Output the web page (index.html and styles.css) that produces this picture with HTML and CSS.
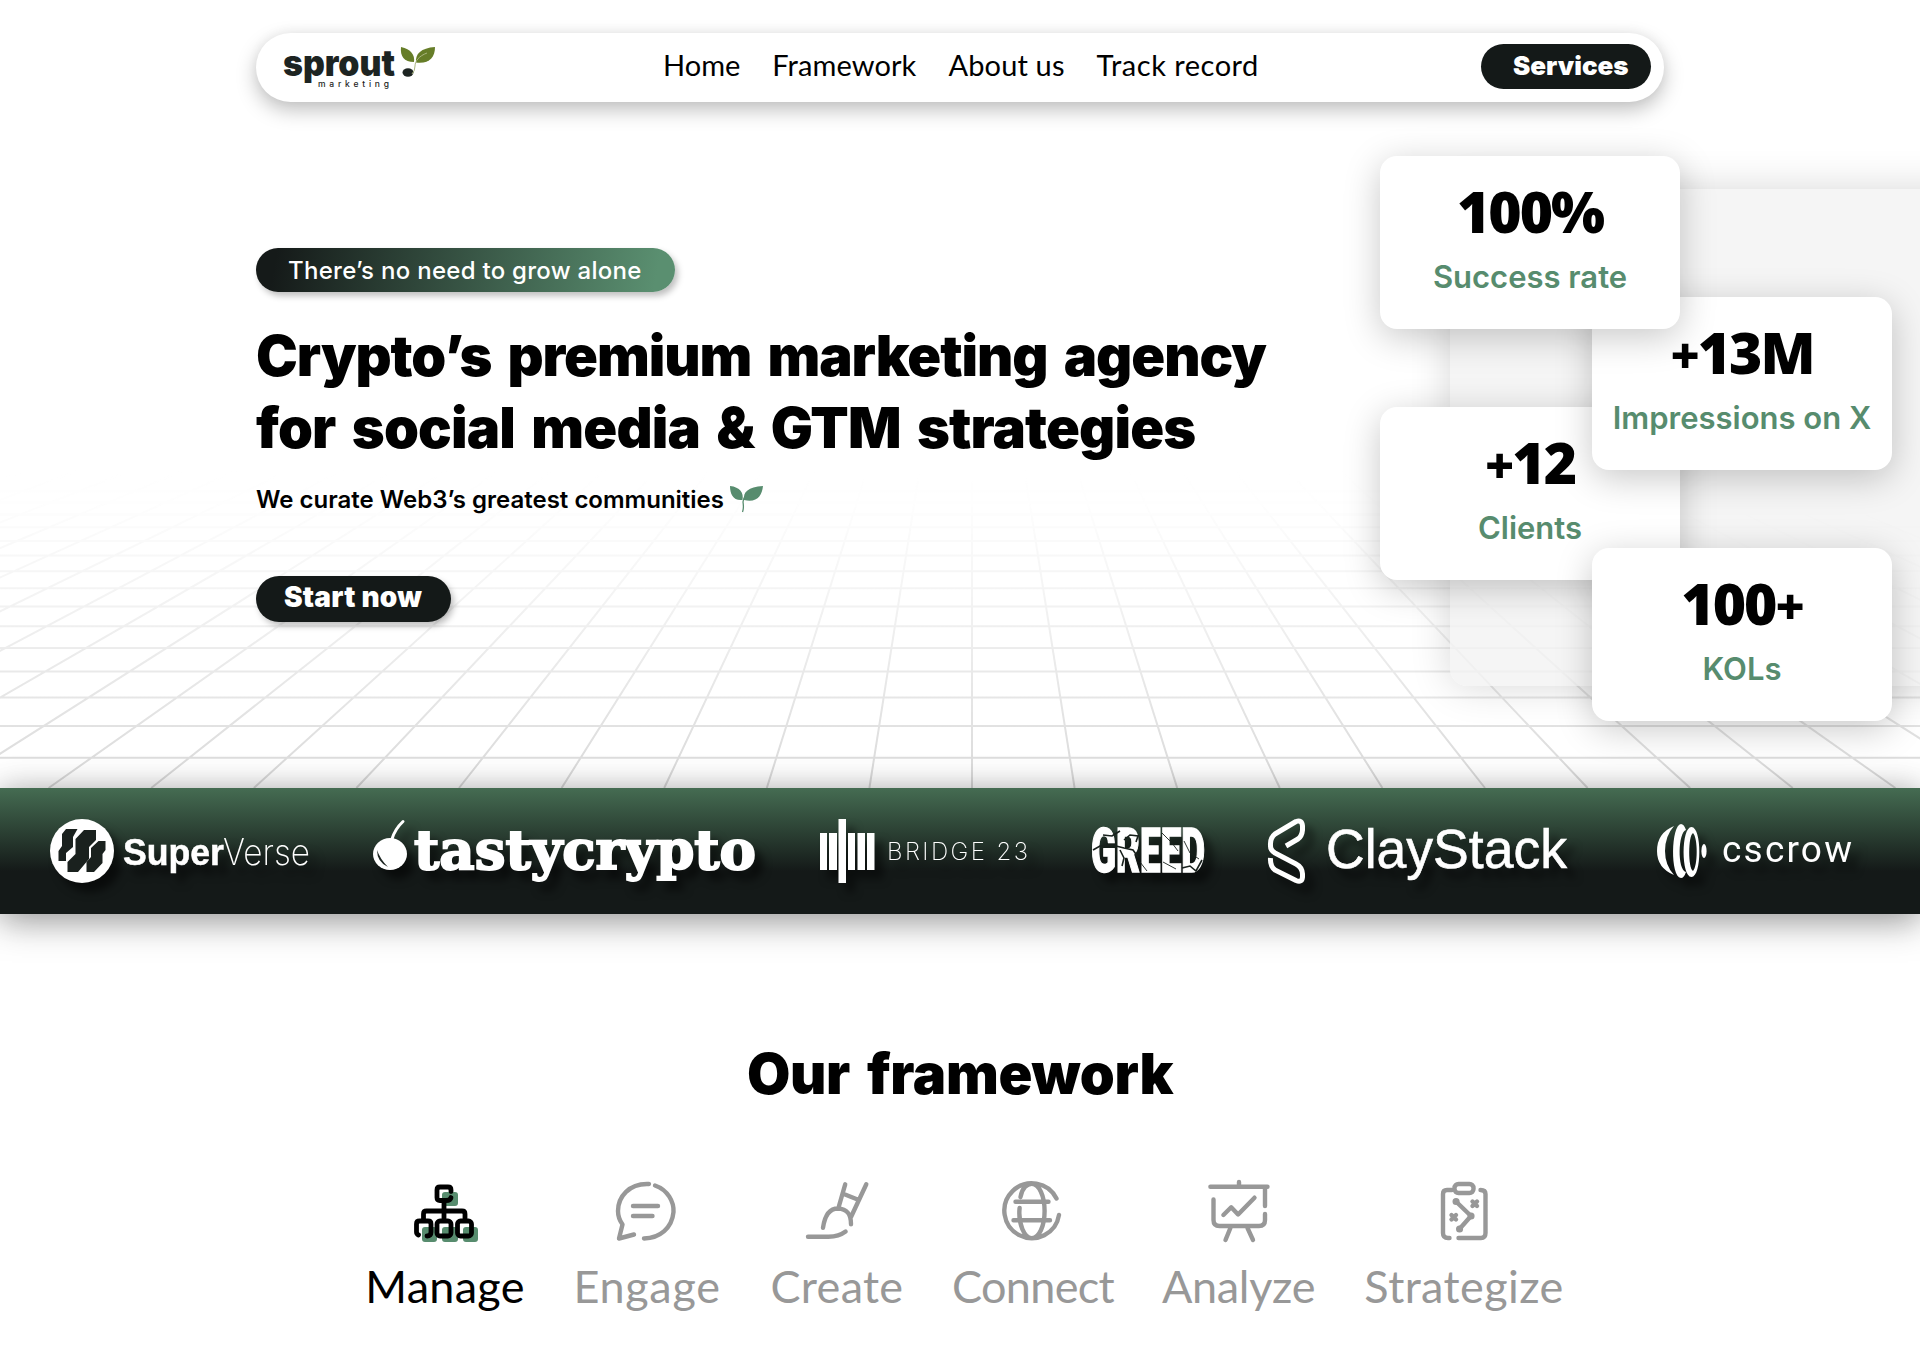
FILE: index.html
```html
<!DOCTYPE html>
<html lang="en">
<head>
<meta charset="utf-8">
<title>Sprout Marketing</title>
<link rel="stylesheet" href="styles.css">
</head>
<body>
<header class="nav">
  <svg class="brand" width="156" height="50" viewBox="282 42 156 50" aria-label="sprout marketing">
    <text class="brand-name" x="283" y="74.500" textLength="112" lengthAdjust="spacingAndGlyphs">sprout</text>
    <text class="brand-sub" x="318" y="85.500" textLength="71">marketing</text>
    <ellipse cx="408" cy="71.500" rx="5.500" ry="4.200" fill="#1d2422"/>
    <path d="M401 46 C411 48 415 54 414 61 C404 61 400 55 401 46Z" fill="#667d28"/>
    <path d="M435 46 C421 47 415 53 416 61.500 C429 63 435 57 435 46Z" fill="#667d28"/>
    <path d="M427 52 C419 55 415 60 415 65 Q415 70 412 73" fill="none" stroke="#a9b57f" stroke-width="1"/>
  </svg>
  <nav class="links">
    <a class="l-home">Home</a><a class="l-frame">Framework</a><a class="l-about">About us</a><a class="l-track">Track record</a>
  </nav>
  <a class="btn btn-services">Services</a>
</header>

<section class="hero">
  <svg class="floor" width="1920" height="320" viewBox="0 468 1920 320" aria-hidden="true">
    <defs>
      <linearGradient id="fade" x1="0" y1="0" x2="0" y2="1">
        <stop offset="0" stop-color="#fff" stop-opacity="0"/>
        <stop offset=".12" stop-color="#fff" stop-opacity=".04"/>
        <stop offset=".4" stop-color="#fff" stop-opacity=".3"/>
        <stop offset="1" stop-color="#fff" stop-opacity="1"/>
      </linearGradient>
      <mask id="m" maskUnits="userSpaceOnUse" x="0" y="468" width="1920" height="320"><rect x="0" y="468" width="1920" height="320" fill="url(#fade)"/></mask>
    </defs>
    <g mask="url(#m)"><g id="lines" fill="none" stroke="#d9d9d9" stroke-width="2"></g></g>
  </svg>
  <div class="pitch">
    <p class="pill">There’s no need to grow alone</p>
    <h1><span class="h-one">Crypto’s premium marketing agency</span><br><span class="h-two">for social media &amp; GTM strategies</span></h1>
    <p class="tagline">We curate Web3’s greatest communities
      <svg width="34" height="28" viewBox="0 0 34 28"><path d="M0 1 C10 2 14 8 12.500 15 C3 16 0 9 0 1Z M33 1 C18 2 13 7 14 15 C27 18 32 11 33 1Z" fill="#578c6e"/><path d="M24 7 C16 9 13 13 13 17 Q14 23 12.500 27" fill="none" stroke="#578c6e" stroke-width="1.300"/></svg>
    </p>
    <a class="btn btn-start">Start now</a>
  </div>
  <div class="stats">
    <div class="panel"></div>
    <div class="card c3"><strong><i>+</i>12</strong><span>Clients</span></div>
    <div class="card c2"><strong><i>+</i>13M</strong><span>Impressions on X</span></div>
    <div class="card c1"><strong>100%</strong><span>Success rate</span></div>
    <div class="card c4"><strong>100<i>+</i></strong><span>KOLs</span></div>
  </div>
</section>

<section class="clients">
  <svg width="262" height="126" viewBox="50 788 262 126">
    <circle cx="82" cy="851" r="32" fill="#fff"/>
    <g fill="#1a211e">
      <path d="M66 829 H77.500 L73 837 V847 L66 853 V861 H58.500 V851 L62 846 V834Z"/>
      <path d="M84 830 H96 V840 L89 847 V859 L78 872 H67.500 V862 L75.500 854 V839Z"/>
      <path d="M98.500 841 H105.500 V850 L102.500 854 V863 L94 872 H86.500 V862 L91 857 V848Z"/>
    </g>
    <text class="sv-bold" x="123" y="865" textLength="101" lengthAdjust="spacingAndGlyphs">Super</text>
    <text class="sv-thin" x="223" y="865" textLength="87" lengthAdjust="spacingAndGlyphs">Verse</text>
  </svg>
  <svg width="386" height="126" viewBox="372 788 386 126">
    <ellipse cx="390" cy="854" rx="17" ry="16" fill="#fff"/>
    <path d="M392 839 Q395 829 403 821.500" fill="none" stroke="#fff" stroke-width="3" stroke-linecap="round"/>
    <path d="M377 850 Q377 862 388 867 Q380 859 377 850Z" fill="#1d2622"/>
    <text class="tasty" x="414" y="868.500" textLength="342" lengthAdjust="spacingAndGlyphs">tastycrypto</text>
  </svg>
  <svg width="210" height="126" viewBox="820 788 210 126">
    <path d="M820 833h7v37h-7z M829 833h8v37h-8z M838.500 819h7.500v64h-7.500z M848 833h7v37h-7z M857.500 833h7.500v37h-7.500z M867 833h7.500v37h-7.500z" fill="#fff"/>
    <text class="bridge" x="887" y="860" textLength="141">BRIDGE 23</text>
  </svg>
  <svg width="116" height="126" viewBox="1090 788 116 126">
    <text class="greed" x="1091" y="872" textLength="114" lengthAdjust="spacingAndGlyphs">GREED</text>
    <path d="M1093 850 L1100 846 L1112 845 L1124 848 L1133 850 L1138 857 M1103 835 L1112 836 L1120 831 M1124 840 L1130 835 L1138 836 L1136 842 M1120 850 L1124 858 L1122 866 M1182 868 L1190 866 L1196 871 L1202 860" fill="none" stroke="#18201c" stroke-width="1.600"/>
    <path d="M1140 862 L1147 871 M1162 833 L1172 843 L1178 851 M1184 841 L1190 853 L1199 859 M1163 862 L1176 869" fill="none" stroke="#18201c" stroke-width=".9"/>
  </svg>
  <svg width="304" height="126" viewBox="1266 788 304 126">
    <path d="M1286 846 L1298 839 Q1302 836 1302.500 830 V826 Q1302 819.500 1296 821.500 L1275 834 Q1270 838 1270.500 845 Q1270 850 1275 853 L1296 864 Q1302 867 1302.500 874 V877 Q1302 883 1296 880.500 L1275 870 Q1270 866 1270.500 858" fill="none" stroke="#fff" stroke-width="5" stroke-linejoin="round"/>
    <text class="clay" x="1326" y="868" textLength="241" lengthAdjust="spacingAndGlyphs">ClayStack</text>
  </svg>
  <svg width="200" height="126" viewBox="1655 788 200 126">
    <g fill="#fff">
      <path d="M1674 826 Q1657 833 1657 851 Q1657 868 1674 875 Q1665 865 1665 851 Q1665 836 1674 826Z"/>
      <path d="M1681 824 C1671 825 1670 877 1681 878 Q1684 878 1686 872 C1677 870 1678 832 1686 830 Q1684 824 1681 824Z"/>
      <path fill-rule="evenodd" d="M1691.500 827 C1702 827 1702 877 1691.500 877 C1681 877 1681 827 1691.500 827Z M1693 833 C1688 836 1688 868 1693 871 C1698 866 1698 838 1693 833Z"/>
      <ellipse cx="1704" cy="851" rx="2.600" ry="7"/>
    </g>
    <text class="cscrow" x="1722" y="862" textLength="130">cscrow</text>
  </svg>
</section>

<section class="framework">
  <h2>Our framework</h2>
  <div class="tabs">
    <div class="tab on t1">
      <svg width="64" height="64" viewBox="0 0 64 64">
        <path class="tint" d="M32 12h10q3 0 3 3v8q0 3-3 3h-10q-3 0-3-3v-8q0-3 3-3z M12 47h9q3 0 3 3v9q0 3-3 3h-9q-3 0-3-3v-9q0-3 3-3z M32 47h10q3 0 3 3v9q0 3-3 3h-10q-3 0-3-3v-9q0-3 3-3z M53 47h9q3 0 3 3v9q0 3-3 3h-9q-3 0-3-3v-9q0-3 3-3z"/>
        <path d="M38 11.500 V10 Q38 7 35 7 H27 Q24 7 24 10 V17.500 Q24 20.500 27 20.500 H33 Q37.500 20.500 38 17.500 M31 21 V40 M10.500 40 V34 Q10.500 31 13.500 31 H49 Q52 31 52 34 V40 M5.500 55 Q3.500 54 3.500 52 V44 Q3.500 41 6.500 41 H15 Q18 41 18 44 V52 Q18 56 14 56"/>
        <rect x="24" y="41" width="14" height="15" rx="3"/><rect x="44.500" y="41" width="14" height="15" rx="3"/>
      </svg>
      <span>Manage</span>
    </div>
    <div class="tab t2">
      <svg width="64" height="64" viewBox="0 0 64 64"><path d="M34 4 C14 3 3 17 3 31 C3 37 5 41 7.500 44.500 L4 58.500 L19 54.500 M40 5.500 C53 10 59 22 58.500 32 C57 48 45 58 29 58.500 M18 26 H43 M18 36 H37.500"/></svg>
      <span>Engage</span>
    </div>
    <div class="tab t3">
      <svg width="64" height="64" viewBox="0 0 64 64"><path d="M40.200 4.300 L33.700 27 M61.300 4.300 L46 37 M39.400 14.300 L53.200 19.700 M18 47.700 C20 34 25 28.500 33 28.500 C42 29 46 34 46 44.300 M3 56.700 H23.400 Q34 56.500 40.600 51.500"/></svg>
      <span>Create</span>
    </div>
    <div class="tab t4">
      <svg width="64" height="64" viewBox="0 0 64 64"><path d="M55.500 18.500 A27.500 27.500 0 1 0 58 35 M14.500 21.700 H47.500 M12.500 40.300 H49 M19.500 17 C21 8 26 3.800 30.800 3.800 C38 3.800 43.600 16 43.600 31 C43.600 46 38 58.200 30.800 58.200 C23.500 58.200 17 44 18.600 28"/></svg>
      <span>Connect</span>
    </div>
    <div class="tab t5">
      <svg width="64" height="64" viewBox="0 0 64 64"><path d="M3.400 6.700 H60.500 M32 6.700 V2 M6.500 19.500 V40 Q6.500 46 12.500 46 H52 Q58 46 58 40 V34 M58 8 V26 M16.400 35 L24.200 27.300 L31.100 34.500 L47.500 17.700 M23.400 48 L18.500 60 M40.500 48 L46 60"/></svg>
      <span>Analyze</span>
    </div>
    <div class="tab t6">
      <svg width="64" height="64" viewBox="0 0 64 64"><path d="M20 10 H15 Q11 10 11 14 V53 Q11 58 16 58 H17.500 M26.500 58 H49 Q53.500 58 53.500 53 V14 Q53.500 10 48.500 10 M24.500 22 L39 36 L27.500 49 M40.500 21.500 L45 26 M45 21.500 L40.500 26 M19.500 35 L24 39.500 M24 35 L19.500 39.500"/><rect x="22.500" y="4" width="19" height="9" rx="4"/><path class="dots" d="M24 21.500 h.1 M39 36 h.1 M27.500 49 h.1"/></svg>
      <span>Strategize</span>
    </div>
  </div>
</section>
<script src="floor.js"></script>
</body>
</html>
```
FILE: styles.css
```css
* { box-sizing: border-box; }
body { margin: 0; width: 1920px; height: 1365px; overflow: hidden; background: #fff; color: #000; font-family: Inter, "Liberation Sans", sans-serif; }
h1, h2, p { margin: 0; }
svg { display: block; overflow: visible; }

.nav { position: relative; z-index: 2; margin: 33px 256px 0; height: 69px; padding: 0 13px 0 26px; border-radius: 35px; background: #fff; box-shadow: 0 8px 20px rgba(0,0,0,.25), 0 -2px 12px rgba(0,0,0,.04); display: flex; align-items: center; }
.brand-name { font: 900 36px Inter, sans-serif; fill: #1d2422; }
.brand-sub { font: 500 8.5px Inter, sans-serif; fill: #1d2422; }
.links { display: flex; gap: 32px; margin-left: 225px; font: 400 29px/69px Lato, sans-serif; padding-bottom: 6px; }
.l-frame { letter-spacing: .1px; }
.l-about { letter-spacing: .15px; }
.l-track { letter-spacing: .5px; }
.btn { display: block; height: 46px; border-radius: 23px; background: #141918; color: #fff; font-weight: 900; line-height: 43px; }
.btn-services { margin-left: auto; width: 170px; height: 45px; margin-bottom: 2px; padding-left: 32px; font-size: 26px; }
.btn-start { width: 195px; padding-left: 28px; margin-top: 61px; font-size: 28px; letter-spacing: .2px; box-shadow: 3px 4px 6px rgba(0,0,0,.25); }

.hero { position: relative; height: 686px; }
.floor { position: absolute; left: 0; bottom: 0; }
.pitch { position: relative; padding: 146px 0 0 256px; width: 1300px; }
.pill { width: 419px; height: 44px; padding-left: 32px; border-radius: 22px; background: linear-gradient(100deg, #151a19 5%, #5a8f70 95%); color: #fff; font-size: 24px; font-weight: 500; line-height: 45px; letter-spacing: .28px; box-shadow: 3px 4px 6px rgba(0,0,0,.25); }
h1, h2 { font-size: 56px; font-weight: 900; line-height: 72px; word-spacing: 6px; }
h1 { margin-top: 28px; }
.h-one { letter-spacing: -1.05px; }
.h-two { letter-spacing: -.85px; }
.tagline { display: flex; gap: 6px; margin-top: 21px; height: 30px; font-size: 24px; font-weight: 600; line-height: 30px; white-space: nowrap; }

.stats { position: absolute; left: 1380px; top: 54px; width: 540px; display: grid; grid-template-columns: 212px 88px 212px; grid-template-rows: 141px 32px 78px 63px 78px 32px 141px; }
.panel { position: absolute; left: 70px; top: 33px; width: 560px; height: 497px; border-radius: 17px; background: rgba(241,241,241,.75); box-shadow: 0 0 40px rgba(0,0,0,.16); }
.card { position: relative; padding-top: 25px; border-radius: 17px; background: #fff; box-shadow: 0 8px 36px rgba(0,0,0,.22); text-align: center; }
.c1 { grid-area: 1 / 1 / 3 / 3; }
.c2 { grid-area: 2 / 2 / 5 / 4; }
.c3 { grid-area: 4 / 1 / 7 / 3; }
.c4 { grid-area: 6 / 2 / 8 / 4; }
.card strong { display: block; font: 800 57px/60px "Open Sans", sans-serif; letter-spacing: -2px; }
.card i { font-style: normal; font-size: 50px; line-height: 0; }
.card span { display: block; margin-top: 16px; color: #578c6e; font-size: 31px; font-weight: 600; line-height: 40px; }

.clients { position: relative; height: 126px; padding-left: 50px; display: flex; background: linear-gradient(#456c52, #141918 66%); box-shadow: 0 8px 34px rgba(0,0,0,.34), 0 0 30px rgba(0,0,0,.13); }
.clients svg { filter: drop-shadow(8px 9px 4px rgba(0,0,0,.55)); flex: none; margin-right: 60px; }
.clients svg:nth-child(2) { margin-right: 62px; }
.clients svg:nth-child(5) { margin-right: 85px; }
.clients text { fill: #fff; }
.sv-bold { font: 700 36px "Liberation Sans", sans-serif; stroke: #fff; stroke-width: .5px; }
.sv-thin { font: 200 36px Inter, sans-serif; }
.tasty { font: 700 54px "DejaVu Serif", serif; stroke: #fff; stroke-width: 2px; }
.bridge { font: 200 24px Inter, sans-serif; }
.greed { font: 900 61px Roboto, sans-serif; stroke: #fff; stroke-width: 1.5px; }
.clay { font: 400 55px "Liberation Sans", sans-serif; stroke: #fff; stroke-width: .6px; }
.cscrow { font: 400 37px Roboto, sans-serif; }

.framework { padding-top: 124px; }
h2 { text-align: center; letter-spacing: -.3px; }
.tabs { display: flex; justify-content: center; gap: 49px; margin-top: 70px; padding-left: 10px; }
.tab { display: flex; flex-direction: column; align-items: center; gap: 15px; color: #989898; font: 400 45px/54px Lato, sans-serif; white-space: nowrap; }
.tab.on { color: #000; }
.tab svg { fill: none; stroke: currentColor; stroke-width: 4.4; stroke-linecap: round; stroke-linejoin: round; }
.tab.on svg { stroke-width: 4.8; }
.tab .tint { fill: #578c6e; stroke: none; }
.tab .dots { stroke-width: 7; }
.t1 { width: 158px; } .t2 { width: 148px; } .t3 { width: 134px; } .t4 { width: 160px; } .t5 { width: 153px; } .t6 { width: 200px; }
.t1 { letter-spacing: .3px; }
.t2 { letter-spacing: .7px; }
.t3 { letter-spacing: .3px; }
.t4 { letter-spacing: -.7px; }
.t5 { letter-spacing: -.3px; }
.t6 { letter-spacing: .4px; }
```
FILE: floor.js
```js
// Perspective floor: rays from a vanishing point at (972, 137) crossed by evenly receding rungs.
const lines = document.getElementById('lines');
let d = '';
for (let k = -36; k <= 36; k++) {
  const x = 972 + 102.6 * k;
  const t = (468 - 137) / (788 - 137);
  d += `M${x} 788L${972 + 102.6 * k * t} 468`;
}
for (let i = 0; i < 16; i++) {
  const y = 137 + 1 / (0.001611 + i * 0.0000865);
  if (y > 468) d += `M0 ${y}H1920`;
}
const path = document.createElementNS('http://www.w3.org/2000/svg', 'path');
path.setAttribute('d', d);
lines.append(path);
```
